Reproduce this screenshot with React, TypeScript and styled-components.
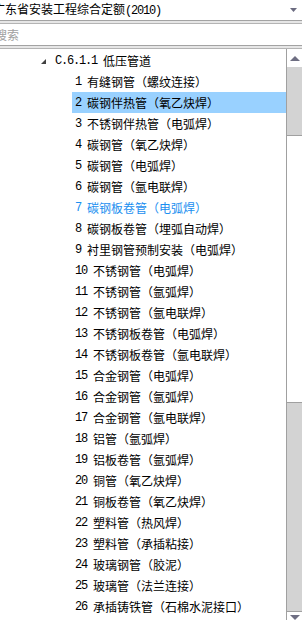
import styled, { createGlobalStyle } from "styled-components";

const GlobalStyle = createGlobalStyle`
  html, body {
    margin: 0;
    padding: 0;
    background: #fff;
    overflow: hidden;
  }
  body {
    font-family: "Noto Sans CJK SC", "Noto Sans", sans-serif;
  }
`;

const items: string[] = [
  "有缝钢管（螺纹连接）",
  "碳钢伴热管（氧乙炔焊）",
  "不锈钢伴热管（电弧焊）",
  "碳钢管（氧乙炔焊）",
  "碳钢管（电弧焊）",
  "碳钢管（氩电联焊）",
  "碳钢板卷管（电弧焊）",
  "碳钢板卷管（埋弧自动焊）",
  "衬里钢管预制安装（电弧焊）",
  "不锈钢管（电弧焊）",
  "不锈钢管（氩弧焊）",
  "不锈钢管（氩电联焊）",
  "不锈钢板卷管（电弧焊）",
  "不锈钢板卷管（氩电联焊）",
  "合金钢管（电弧焊）",
  "合金钢管（氩弧焊）",
  "合金钢管（氩电联焊）",
  "铝管（氩弧焊）",
  "铝板卷管（氩弧焊）",
  "铜管（氧乙炔焊）",
  "铜板卷管（氧乙炔焊）",
  "塑料管（热风焊）",
  "塑料管（承插粘接）",
  "玻璃钢管（胶泥）",
  "玻璃管（法兰连接）",
  "承插铸铁管（石棉水泥接口）",
];

const SELECTED = 2;
const HOVERED = 7;

const App: React.FC<{}> = () => {
  return (
    <Frame>
      <GlobalStyle />
      <ComboBar>
        <ComboText>
          广东省安装工程综合定额<Mono>(2010)</Mono>
        </ComboText>
        <DropArrow width="7" height="5" viewBox="0 0 7 5">
          <polygon points="0,0 7,0 3.5,4" fill="#6b6b80" />
        </DropArrow>
      </ComboBar>
      <Separator />
      <SearchBar>
        <Placeholder>搜索</Placeholder>
      </SearchBar>
      <Separator />
      <TreeArea>
        <TreeList>
          <HeaderRow>
            <Expander width="5" height="5" viewBox="0 0 5 5">
              <polygon points="0,5 5,5 5,0" fill="#404040" />
            </Expander>
            <Mono>C.6.1.1 </Mono>低压管道
          </HeaderRow>
          {items.map((name, i) => (
            <ItemRow
              key={i}
              $selected={i + 1 === SELECTED}
              $hover={i + 1 === HOVERED}
            >
              <Mono>{`${i + 1} `}</Mono>
              {name}
            </ItemRow>
          ))}
        </TreeList>
        <ScrollBar>
          <ScrollButton>
            <svg width="10" height="5" viewBox="0 0 10 5">
              <polygon points="0,5 10,5 5,0" fill="#6e6e82" />
            </svg>
          </ScrollButton>
          <Track $size={68} />
          <Thumb />
          <Track $size={208} />
          <ScrollButton $down>
            <svg width="10" height="5" viewBox="0 0 10 5">
              <polygon points="0,0 10,0 5,5" fill="#6e6e82" />
            </svg>
          </ScrollButton>
        </ScrollBar>
      </TreeArea>
    </Frame>
  );
};

export default App;

const Frame = styled.div`
  width: 302px;
  height: 620px;
  display: flex;
  flex-direction: column;
  overflow: hidden;
  font-size: 12px;
  color: #000;
`;

const Mono = styled.span`
  font-family: "Liberation Mono", monospace;
  font-size: 12px;
  letter-spacing: -1.2px;
  white-space: pre;
`;

const ComboBar = styled.div`
  height: 20px;
  display: flex;
  align-items: center;
  overflow: hidden;
  flex-shrink: 0;
`;

const ComboText = styled.span`
  margin-left: -7px;
  white-space: nowrap;
  line-height: 20px;
`;

const DropArrow = styled.svg`
  margin-left: auto;
  margin-right: 5px;
  margin-top: 1px;
`;

const Separator = styled.div`
  height: 4px;
  box-sizing: border-box;
  border-top: 1px solid #a3a3a3;
  border-bottom: 1px solid #b4b4b4;
  background: #e6e6e6;
  flex-shrink: 0;
`;

const SearchBar = styled.div`
  height: 21px;
  display: flex;
  align-items: center;
  overflow: hidden;
  flex-shrink: 0;
`;

const Placeholder = styled.span`
  margin-left: -5px;
  color: #a0a0a0;
  line-height: 21px;
`;

const TreeArea = styled.div`
  flex: 1;
  min-height: 0;
  display: flex;
  overflow: hidden;
`;

const TreeList = styled.div`
  flex: 1;
  padding-top: 1px;
  overflow: hidden;
`;

const HeaderRow = styled.div`
  height: 21px;
  display: flex;
  align-items: center;
  padding-left: 41px;
  white-space: nowrap;
`;

const Expander = styled.svg`
  margin-right: 9px;
  margin-top: 1px;
`;

const ItemRow = styled.div<{ $selected?: boolean; $hover?: boolean }>`
  height: 21px;
  display: flex;
  align-items: center;
  margin-left: 72px;
  padding-left: 3px;
  white-space: nowrap;
  background: ${(p) => (p.$selected ? "#99d1ff" : "transparent")};
  color: ${(p) => (p.$hover ? "#1b8ff0" : "#000")};
`;

const ScrollBar = styled.div`
  width: 15px;
  border-left: 1px solid #a0a0a0;
  display: flex;
  flex-direction: column;
  flex-shrink: 0;
  overflow: hidden;
`;

const ScrollButton = styled.div<{ $down?: boolean }>`
  height: 18px;
  flex-shrink: 0;
  display: flex;
  justify-content: center;
  align-items: ${(p) => (p.$down ? "flex-start" : "center")};
  padding-top: ${(p) => (p.$down ? "3px" : "0")};
  box-sizing: border-box;
  background: #fff;
  border-top: 1px solid ${(p) => (p.$down ? "#a0a0a0" : "transparent")};
`;

const Track = styled.div<{ $size: number }>`
  height: ${(p) => p.$size}px;
  background: #d3d3d3;
  flex-shrink: 0;
`;

const Thumb = styled.div`
  height: 268px;
  flex-shrink: 0;
  box-sizing: border-box;
  background: #fff;
  border-top: 1px solid #a0a0a0;
  border-bottom: 1px solid #a0a0a0;
`;
